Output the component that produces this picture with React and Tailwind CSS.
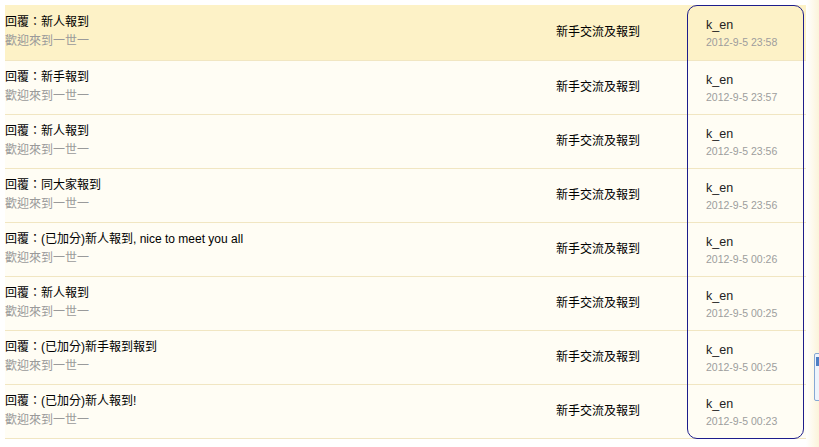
const rows = [
  { title: '回覆：新人報到', time: '2012-9-5 23:58', active: true },
  { title: '回覆：新手報到', time: '2012-9-5 23:57' },
  { title: '回覆：新人報到', time: '2012-9-5 23:56' },
  { title: '回覆：同大家報到', time: '2012-9-5 23:56' },
  { title: '回覆：(已加分)新人報到, nice to meet you all', time: '2012-9-5 00:26' },
  { title: '回覆：新人報到', time: '2012-9-5 00:25' },
  { title: '回覆：(已加分)新手報到報到', time: '2012-9-5 00:25' },
  { title: '回覆：(已加分)新人報到!', time: '2012-9-5 00:23' },
]

const cjk = { fontFamily: '"Liberation Sans", "Noto Sans CJK TC", sans-serif' }

export default function App() {
  return (
    <div className="w-[819px] h-[447px] bg-white flex overflow-hidden" style={cjk}>
      <div className="relative w-[806px] pl-[5px] pt-[5px]">
        <div className="flex flex-col border-t border-[#fdf2c7]">
          {rows.map((r, i) => (
            <div
              key={i}
              className={`flex border-b border-[#f1e6c2] ${r.active ? 'h-[55px] bg-[#fdf2c7]' : 'h-[54px] bg-[#fffdf4]'}`}
            >
              <div className="w-[551px] pt-[7px] flex flex-col text-[12px] leading-[19px]">
                <span className="text-black">{r.title}</span>
                <span className="text-[#9a9a9a]">歡迎來到一世一</span>
              </div>
              <div className="w-[131px] pt-[16px] text-[12px] leading-[20px] text-black">新手交流及報到</div>
              <div className="flex-1 pl-[19px] pt-[10px] flex flex-col">
                <span className="text-[12.5px] leading-[18px] text-[#222]">k_en</span>
                <span className="text-[10.5px] leading-[17px] text-[#9d9d9d]">{r.time}</span>
              </div>
            </div>
          ))}
        </div>
        <div className="absolute left-[687px] top-[5px] w-[117px] h-[434px] border border-[#1d1d8c] rounded-[10px] pointer-events-none" />
      </div>
      <div className="relative flex-1 bg-gradient-to-r from-[#ffffff] to-[#fbf4da]">
        <div className="absolute left-[8px] top-[353px] w-[10px] h-[48px] border border-[#86a8d4] bg-[#eef4fb] rounded-l-[2px]">
          <div className="mt-[3px] ml-[1px] w-[4px] h-[9px] bg-[#4d7fc4]" />
        </div>
      </div>
    </div>
  )
}
